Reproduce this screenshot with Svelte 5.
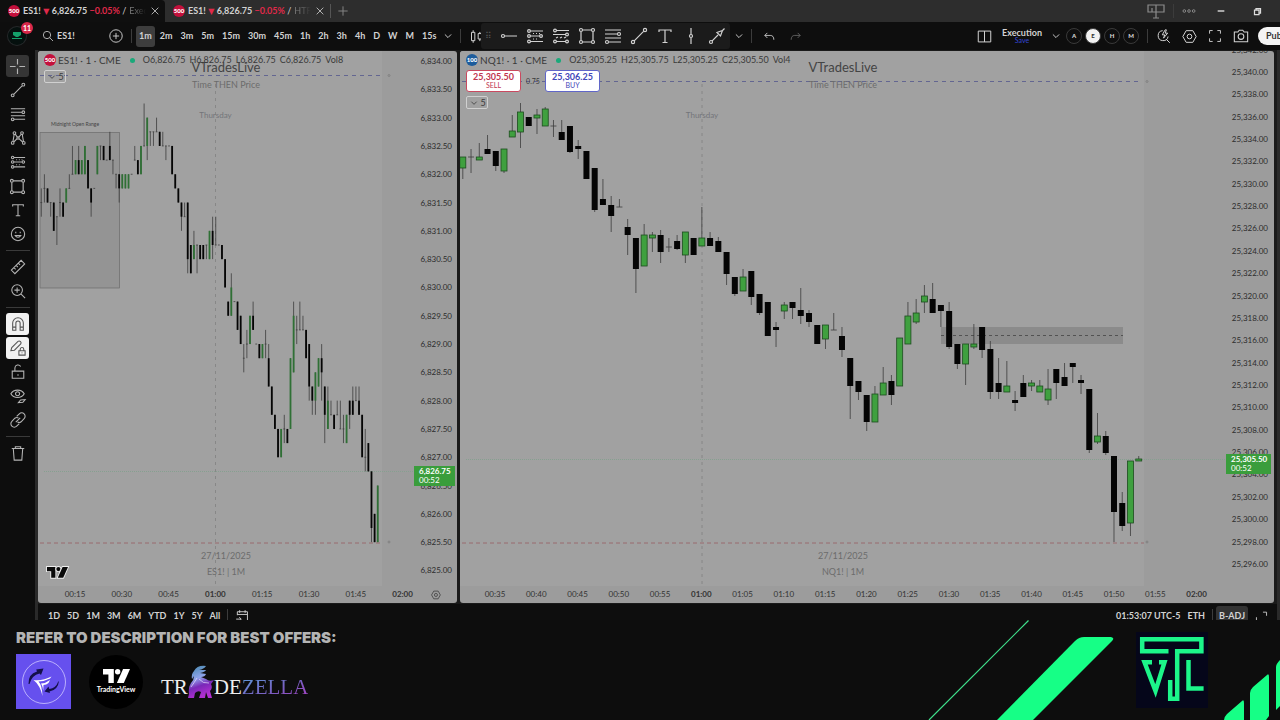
<script>
  const ring = (x, y, r) =>
    `M${x - r} ${y}a${r} ${r} 0 1 0 ${r * 2} 0a${r} ${r} 0 1 0 ${-r * 2} 0`;

  // all icons live on an 18 x 18 grid
  const icons = {
    cross: "M9 1v6M9 11v6M1 9h6M11 9h6",
    trend: `${ring(3, 15, 1.6)}${ring(15, 3, 1.6)}M4.2 13.8L13.8 4.2`,
    levels: `M1 3h16M1 7h12.5M1 11h16M4.5 15H17${ring(15, 7, 1.5)}${ring(3, 15, 1.5)}`,
    pattern: `${ring(3, 14.5, 1.5)}${ring(5, 3.5, 1.5)}${ring(9, 9, 1.3)}${ring(13.5, 3.5, 1.5)}${ring(15.5, 14.5, 1.5)}M3.3 13L4.7 5M6 4.6L8.2 8M10 8l2.6-3.2M13.8 5l1.4 8M4.3 13.5L8 9.8M10 9.8l4.2 3.7`,
    position: `${ring(3, 4, 1.4)}${ring(3, 9, 1.4)}${ring(3, 14.5, 1.4)}${ring(15, 9, 1.4)}M4.5 4H17M4.5 9h9M4.5 14.5H17M7 6.5h1M10 6.5h1M13 6.5h1M7 12h1M10 12h1`,
    channel: `${ring(3, 3.5, 1.4)}${ring(15, 7.5, 1.4)}${ring(3, 14.5, 1.4)}${ring(15, 14.5, 1.4)}M4.5 3.5H17M1 7.5h12.5M4.5 14.5h9M4 11l2-1M8 11l2-1M12 11l2-1`,
    rect: `${ring(3, 3, 1.5)}${ring(15, 3, 1.5)}${ring(3, 15, 1.5)}${ring(15, 15, 1.5)}M4.5 3h9M4.5 15h9M3 4.5v9M15 4.5v9`,
    text: "M3 5V3h12v2M9 3v12.5M6.5 15.5h5",
    smile: `${ring(9, 9, 7.5)}M6.5 6.5v1.6M11.5 6.5v1.6M5.8 10.7c1.5 2.6 4.9 2.6 6.4 0z`,
    ruler: "M1.5 12.5L12.5 1.5l4 4-11 11zM4.5 9.8l1.8 1.8M7 7.3l1.8 1.8M9.5 4.8l1.8 1.8",
    zoom: `${ring(8, 8, 6)}M12.5 12.5L17 17M5 8h6M8 5v6`,
    magnet: "M3 16V8a6 6 0 0 1 12 0v8h-3.6V8a2.4 2.4 0 0 0-4.8 0v8zM3 12.5h3.6M11.4 12.5H15",
    pencilLock: "M1 12l1-3.5L9 1.5q1.5-1 2.8.4t.3 2.6L5 11.5zM10 12h7v5h-7zM11.5 12v-1.5a2 2 0 0 1 4 0V12M13.5 14v1",
    lock: "M2.5 8h13v8h-13zM5.5 8V4.5a3.5 3.5 0 0 1 6.5-1.7M9 11.5v1.6",
    eye: `M1 6.5C4 1 13 1 16 6.5C13 12 4 12 1 6.5z${ring(8.5, 6.5, 2.3)}M9.5 16.5l2.5-3 5-.5-2.5 3z`,
    link: "M7.5 5L10.5 2a3.7 3.7 0 0 1 5.4 5.4L12.5 11q-2 1.6-4 .2M10.5 13l-3 3A3.7 3.7 0 0 1 2.1 10.6L5.5 7q2-1.6 4-.2M6.5 11.5l5-5",
    trash: "M2 4h14M6 4V2h6v2M3.7 4l1 13h8.6l1-13",
    search: `${ring(7.5, 7.5, 5.5)}M11.5 11.5L16.5 16.5`,
    plus: `${ring(9, 9, 8)}M9 5v8M5 9h8`,
    candles: "M5 1.5v2.5M5 14v2.5M3 4h4v10H3zM13 3.5v2M13 12v2.5M11 5.5h4V12h-4z",
    ray: `${ring(3, 9, 1.5)}M4.5 9H17`,
    vertical: `${ring(9, 9, 1.5)}M9 1v6.5M9 10.5V17`,
    arrow: `${ring(3, 15, 1.5)}M4.2 13.8L10 8M9 5.5l3.5 3.5 2-5.5zM14.5 3.5l2-2`,
    chevron: "M5 7l4 4 4-4",
    undo: "M6 4L2.5 7.5 6 11M2.5 7.5H10q5 0 5 6",
    redo: "M12 4l3.5 3.5L12 11M15.5 7.5H8q-5 0-5 6",
    layout: "M1.5 2.5h15v13h-15zM9 2.5v13",
    flash: "M8 2a6 6 0 1 0 6.5 7M12 12l4.5 4.5M11 1L7.5 7h3L9 11l5-6h-3l1.5-4z",
    hex: `M5 2h8l4 7-4 7H5L1 9z${ring(9, 9, 2.8)}`,
    full: "M2 6V2h4M12 2h4v4M16 12v4h-4M6 16H2v-4",
    camera: `M1.5 4.5h4l1.5-2h4l1.5 2h4v11h-15z${ring(9, 9.6, 3.2)}`,
    close: "M4 4l10 10M14 4L4 14",
    add: "M9 3v12M3 9h12",
    calendar: "M3 8V3.5h13V15.5h-5M3 7h13M6 1.5v3.5M13 1.5v3.5M1.5 13h6M5.5 10.5l2.5 2.5-2.5 2.5",
    expand: "M11 3h5v5M2 10v6h5",
    monitor: "M1 3h16v7H1zM9 3v13M6 16h6M5 10V6",
    dots: `${ring(3, 9, 1.7)}${ring(9, 9, 1.7)}${ring(15, 9, 1.7)}`,
    minimize: "M3 9h12",
    restore: "M3 6h9v9H3zM6 6V3h9v9h-3",
  };

  const sideTools = [
    ["cross", "Crosshair"], ["trend", "Trend line"], ["levels", "Fib retracement"],
    ["pattern", "Patterns"], ["position", "Position"], ["rect", "Rectangle"],
    ["text", "Text"], ["smile", "Icons"], null,
    ["ruler", "Measure"], ["zoom", "Zoom in"], null,
    ["magnet", "Magnet"], ["pencilLock", "Stay in drawing mode"], ["lock", "Lock drawings"],
    ["eye", "Hide drawings"], ["link", "Sync drawings"], null,
    ["trash", "Remove"],
  ];
  const timeframes = ["1m", "2m", "3m", "5m", "15m", "30m", "45m", "1h", "2h", "3h", "4h", "D", "W", "M", "15s"];
  const favorites = ["ray", "position", "channel", "rect", "levels", "trend", "text", "vertical", "arrow"];
  const ranges = ["1D", "5D", "1M", "3M", "6M", "YTD", "1Y", "5Y", "All"];
  const tabs = [
    { name: "Exec", active: true },
    { name: "HTF", active: false },
  ];

  // [high, body top, body bottom, low, colour], counted in ticks below 6,833.25
  const esTicks = [
    [6,7,7,8],[5,6,6,7],[6,6,7,7],[7,7,7,8],[7,7,9,9],[8,8,8,10],[6,7,7,8],[7,7,8,8],[6,6,7,7,1],[5,6,6,6],
    [3,5,5,5],[4,4,5,5,1],[3,4,5,5],[4,4,5,5,1],[3,3,5,5,1],[4,4,6,6],[6,6,7,8],[6,6,6,6],[3,3,5,5,1],[3,3,3,4],
    [3,3,4,4],[4,4,4,4],[2,3,4,4],[4,4,4,5],[5,5,5,6],[5,5,6,7],[5,5,6,6,1],[5,5,6,6,1],[5,5,6,6,1],[5,5,5,5],
    [3,4,4,4],[4,4,5,5],[3,3,5,5,1],[0,3,3,3],[1,1,3,4,1],[2,2,2,3],[2,2,2,3],[1,2,2,2],[2,2,3,3],[2,3,3,3],
    [3,3,3,4],[3,3,3,3],[3,3,5,5],[5,5,6,6],[6,6,7,7],[7,7,8,9],[7,8,8,8],[7,7,11,12],[10,10,12,12],[9,10,11,11,1],
    [10,10,10,12],[10,10,11,11],[10,10,11,11],[10,10,10,11],[9,9,11,11,1],[8,9,10,11],[8,10,10,10],[10,10,10,10],[10,10,11,11],[11,11,13,13],
    [14,14,15,15],[12,13,15,15,1],[14,14,14,14],[14,14,16,16],[15,15,17,17],[17,18,18,19],[16,17,17,18],[15,15,17,17,1],[14,15,16,16],[17,17,17,17],
    [17,17,18,18],[17,17,18,18,1],[16,17,17,18],[17,18,20,20],[20,20,22,22],[22,22,23,23],[23,23,25,25],[23,23,25,25,1],[22,23,23,24],[23,23,24,24],
    [18,18,23,23,1],[14,15,19,19,1],[15,16,16,17],[14,16,16,16],[15,16,16,16],[16,16,18,18],[17,17,20,21],[20,20,21,22],[19,19,21,22,1],[18,18,20,20,1],
    [17,18,19,21],[20,20,22,24],[20,21,23,23,1],[21,22,22,22],[22,22,23,23],[21,22,22,22],[21,23,23,23],[22,23,23,24],[22,22,24,24,1],[21,21,22,23],
    [20,21,22,22],[20,21,21,21],[20,21,22,22],[22,22,25,25],[23,25,25,26],[24,24,26,26],[26,26,30,31],[29,29,31,31],[27,27,31,31,1],
  ];
  const esCandles = esTicks.map(([h, t, b, l, up]) => [
    ...[h, t, b, l].map((k) => 103.5 + k * 14.15),
    up,
  ]);

  // same order, in chart units
  const nqCandles = [
    [157,157,168,179,1],[149,157,157,173],[143,157,160,160,1],[135,149,154,154],[151,151,166,171],[149,149,171,173,1],[115,131,137,137,1],[103,112,132,148,1],
    [117,117,126,126],[109,115,118,134,1],[107,109,126,126,1],[120,126,126,137],[120,132,140,140],[126,126,152,153],[140,146,149,159],[151,151,179,179],
    [168,168,210,212],[179,199,205,205],[196,205,216,232],[199,207,207,207],[219,227,235,255],[238,238,269,293],[224,235,266,266,1],[232,235,238,252,1],
    [230,235,252,263],[238,247,247,252],[235,241,249,250],[232,232,255,263,1],[238,238,255,255],[207,238,246,246,1],[232,238,246,246],[237,241,252,252],
    [252,252,274,285],[277,277,294,296],[269,277,291,291,1],[271,271,297,305],[294,294,313,315],[302,302,336,336],[322,327,330,347],[302,305,311,319,1],
    [302,302,308,319],[288,310,316,324],[310,313,322,327],[325,325,344,344],[325,325,339,349,1],[313,330,330,330],[327,336,350,357],[358,358,386,419],
    [381,381,392,400],[395,395,422,431],[386,394,422,422,1],[367,383,395,395,1],[375,381,395,405],[338,338,386,386,1],[302,316,344,344,1],[299,313,322,324,1],
    [285,296,302,313,1],[283,299,313,313],[305,305,311,327],[302,311,347,349],[344,344,364,369],[344,344,364,385,1],[324,344,347,349,1],[327,327,350,358],
    [341,349,392,399],[358,383,392,399],[361,386,392,392,1],[391,400,403,411],[375,383,397,397],[380,383,386,391,1],[380,386,392,392,1],[369,389,400,405,1],
    [369,369,383,399],[363,377,386,386],[363,363,367,383],[375,380,383,394],[389,389,450,453],[413,436,442,444,1],[431,436,453,455],[456,456,512,542],
    [492,503,526,531],[461,461,523,536,1],[456,459,461,461,1],
  ];

  const fmt = (n) => n.toLocaleString("en-US", { minimumFractionDigits: 2 });
  const clock = (m) =>
    `${String(Math.floor(m / 60)).padStart(2, "0")}:${String(m % 60).padStart(2, "0")}`;

  const axis = (from, step, count, y, dy) =>
    Array.from({ length: count }, (_, i) => ({ label: fmt(from - i * step), y: y + i * dy }));
  const times = (from, step, count, x, dx) =>
    Array.from({ length: count }, (_, i) => ({ label: clock(from + i * step), x: x + i * dx }));

  const charts = [
    {
      id: "es", symbol: "ES1!", logo: "500", box: [38, 51, 419, 552], plotEnd: 382,
      quote: ["O6,826.75", "H6,826.75", "L6,826.75", "C6,826.75", "Vol8"],
      candles: esCandles, x0: 41.3, dx: 3.115, body: 1.8,
      prices: axis(6834, 0.5, 19, 61, 28.3), priceX: 452,
      times: times(15, 15, 8, 75, 46.8),
      center: 226, midnight: 215.5, high: 75.5, highX: 389, low: 543, last: 471.5,
      lastText: "6,826.75", tagX: 414, tagY: 466, tagW: 41,
    },
    {
      id: "nq", symbol: "NQ1!", logo: "100", box: [460, 51, 814, 552], plotEnd: 1144,
      quote: ["O25,305.25", "H25,305.75", "L25,305.25", "C25,305.50", "Vol4"],
      candles: nqCandles, x0: 462.8, dx: 8.243, body: 6,
      prices: axis(25342, 2, 24, 49.6, 22.36), priceX: 1268,
      times: times(35, 5, 18, 495, 41.27),
      center: 843, midnight: 702, high: 81.5, highX: 1147, low: 543, last: 459.5,
      lastText: "25,305.50", tagX: 1226, tagY: 454, tagW: 45,
    },
  ];
</script>

{#snippet icon(name, size = 14)}
  <svg class="icon" width={size} height={size} viewBox="0 0 18 18" aria-hidden="true">
    <path d={icons[name]} />
  </svg>
{/snippet}

{#snippet tvMark()}
  <path d="M0 0H14V18H7V7H0z" />
  <circle cx="19" cy="3.5" r="3.5" />
  <path d="M26 0H35L27 18H18z" />
{/snippet}

{#snippet plot(c)}
  <svg class="plot" viewBox={c.box.join(" ")} role="img" aria-label="{c.symbol} chart">
    <rect x={c.box[0]} y="51" width={c.plotEnd - c.box[0]} height="535" class="area" />

    {#if c.id === "es"}
      <rect x="40" y="132.5" width="79.5" height="155.5" class="range" />
      <text x="75" y="126" class="tiny">Midnight Open Range</text>
    {:else}
      <rect x="941" y="327" width="182" height="17" class="gap" />
      <path d="M941 335.5H1123" class="gap-mid" />
    {/if}

    <path d="M{c.midnight} 84V586" class="midnight" />
    <path d="M{c.box[0] + 2} {c.high}H{c.highX - 8}" class="high" />
    <path d="M{c.box[0] + 2} {c.low}H{c.plotEnd}" class="low" />
    <path d="M{c.box[0] + 6} {c.last}H{c.tagX}" class="last" />
    <circle cx={c.highX} cy={c.high} r="1" class="handle" />
    <circle cx={c.highX} cy={c.low - 1} r="1" class="handle" />

    <text x={c.center} y="72" class="title">VTradesLive</text>
    <text x={c.center} y="88" class="sub">Time THEN Price</text>
    <text x={c.midnight} y="118" class="day">Thursday</text>
    <text x={c.center} y="559" class="sub">27/11/2025</text>
    <text x={c.center} y="575" class="sub">{c.symbol} | 1M</text>

    {#each c.candles as [high, top, bottom, low, up], i}
      {@const x = c.x0 + i * c.dx}
      <g class:up>
        <path d="M{x} {high}V{low}" class="wick" />
        {#if top === bottom}
          <path d="M{x - c.body / 2} {top}h{c.body}" class="wick" />
        {:else}
          <rect x={x - c.body / 2} y={top} width={c.body} height={bottom - top} class="body {c.id}" />
        {/if}
      </g>
    {/each}

    {#each c.prices as p}
      <text x={c.priceX} y={p.y + 3} class="price">{p.label}</text>
    {/each}
    {#each c.times as t}
      <text x={t.x} y="597" class="time" class:hour={t.label === "01:00" || t.label === "02:00"}>{t.label}</text>
    {/each}

    <rect x={c.tagX} y={c.tagY} width={c.tagW} height="20" class="tag" />
    <text x={c.tagX + 5} y={c.tagY + 8} class="tag-text strong">{c.lastText}</text>
    <text x={c.tagX + 5} y={c.tagY + 17} class="tag-text">00:52</text>

    {#if c.id === "es"}
      <g class="watermark" transform="translate(47 567) scale(.6)">{@render tvMark()}</g>
      <g class="axis-gear" transform="translate(431 590) scale(.55)"><path d={icons.hex} /></g>
    {/if}
  </svg>
{/snippet}

<div class="app">
  <header class="tabs">
    {#each tabs as tab}
      <div class="tab" class:active={tab.active}>
        <span class="coin red">500</span>
        <a href="#{tab.name}"><b>ES1!</b> <i class="down">▼</i> <b>6,826.75</b> <b class="down">−0.05%</b> /</a>
        <span class="tab-name">{tab.name}</span>
        <button aria-label="Close tab">{@render icon("close", 12)}</button>
      </div>
    {/each}
    <button class="new-tab" aria-label="New tab">{@render icon("add", 14)}</button>
    <div class="window">
      <button aria-label="Displays">{@render icon("monitor", 18)}</button>
      <span class="sep"></span>
      <button aria-label="More">{@render icon("dots", 14)}</button>
      <button class="bright" aria-label="Minimize">{@render icon("minimize", 10)}</button>
      <button class="bright" aria-label="Restore">{@render icon("restore", 9)}</button>
    </div>
  </header>

  <nav class="toolbar">
    <button class="avatar" aria-label="Profile">
      <svg width="10" height="8" viewBox="0 0 10 8" aria-hidden="true"><path d="M1 0h8v3L6 5H4L1 3zM0 6h10v1H0z" /></svg>
      <span class="badge">11</span>
    </button>
    <button class="symbol">{@render icon("search", 12)}<b>ES1!</b></button>
    <button aria-label="Compare">{@render icon("plus", 14)}</button>
    <span class="sep"></span>
    <div class="frames">
      {#each timeframes as tf, i}
        <button class="frame" class:active={i === 0}>{tf}</button>
      {/each}
    </div>
    <button class="narrow" aria-label="More intervals">{@render icon("chevron", 14)}</button>
    <span class="sep"></span>
    <button class="candle-btn" aria-label="Bar style">{@render icon("candles", 15)}</button>
    <div class="favorites">
      <span class="grip" aria-hidden="true">⠿</span>
      {#each favorites as f}
        <button class="tool" aria-label={f}>{@render icon(f, 18)}</button>
      {/each}
    </div>
    <button class="narrow" aria-label="More tools">{@render icon("chevron", 14)}</button>
    <span class="sep"></span>
    <button class="tool" aria-label="Undo">{@render icon("undo", 13)}</button>
    <button class="tool dim" aria-label="Redo">{@render icon("redo", 13)}</button>

    <div class="right">
      <button class="tool" aria-label="Layout">{@render icon("layout", 15)}</button>
      <button class="save"><b>Execution</b><span>Save</span></button>
      <button class="narrow" aria-label="Manage layouts">{@render icon("chevron", 14)}</button>
      <div class="letters">
        {#each ["A", "E", "H", "M"] as l}
          <button class="letter" class:active={l === "E"}>{l}</button>
        {/each}
      </div>
      <span class="sep"></span>
      <button class="tool" aria-label="Quick search">{@render icon("flash", 15)}</button>
      <button class="tool" aria-label="Settings">{@render icon("hex", 15)}</button>
      <button class="tool" aria-label="Fullscreen">{@render icon("full", 14)}</button>
      <button class="tool" aria-label="Snapshot">{@render icon("camera", 16)}</button>
      <button class="publish">Publish</button>
    </div>
  </nav>

  <main>
    <aside>
      {#each sideTools as tool}
        {#if tool}
          <button
            class:current={tool[0] === "cross"}
            class:on={tool[0] === "magnet" || tool[0] === "pencilLock"}
            aria-label={tool[1]}>{@render icon(tool[0], tool[0] === "cross" || tool[0] === "rect" ? 17 : 16)}</button>
        {:else}
          <hr />
        {/if}
      {/each}
    </aside>

    <section class="workspace">
      <div class="panes">
        {#each charts as c}
          <article>
            {@render plot(c)}
            <div class="legend">
              <div class="quote">
                <span class="coin" class:red={c.id === "es"}>{c.logo}</span>
                <span class="name">{c.symbol} · 1 · CME</span>
                <span class="live"></span>
                {#each c.quote as q}<span>{q}</span>{/each}
              </div>
              {#if c.id === "nq"}
                <div class="orders">
                  <button class="sell"><b>25,305.50</b>SELL</button>
                  <span>0.75</span>
                  <button class="buy"><b>25,306.25</b>BUY</button>
                </div>
              {/if}
              <button class="fold">{@render icon("chevron", 12)}5</button>
            </div>
          </article>
        {/each}
      </div>
      <div class="bottom">
        {#each ranges as r}<button>{r}</button>{/each}
        <span class="sep"></span>
        <button aria-label="Go to date">{@render icon("calendar", 14)}</button>
        <div class="session">
          <button>01:53:07 UTC-5</button>
          <button>ETH</button>
          <span class="sep"></span>
          <button class="adj">B-ADJ</button>
          <button aria-label="Maximize">{@render icon("expand", 13)}</button>
        </div>
      </div>
    </section>
  </main>

  <footer>
    <div class="promo">
      <h2>REFER TO DESCRIPTION FOR BEST OFFERS:</h2>
      <div class="brands">
        <svg width="55" height="55" viewBox="0 0 55 55" role="img" aria-label="Sponsor">
          <rect width="55" height="55" fill="#6650ee" />
          <circle cx="28" cy="28" r="21.5" fill="none" stroke="#cfc8ff" stroke-width=".8" />
          <path d="M12.500 30Q12 20 21 17.500l-.8-2L27.500 14.500l-2.500 6.500-1.500-1.500Q16 21 13.500 30z" fill="#14104a" />
          <path d="M43 27Q42 36 33.500 37.500l.5 1.500-5.500-1.500 4-5 .8 2.500Q40 34 42 28z" fill="#14104a" />
          <path d="M17.500 26Q27 27 35.500 22.500L34 24.500Q28 27.500 22.500 27.500 26 31 26.500 42 24 31 17.500 26zM25 29.500q4.500 0 9-3.500l-1.500 3q-2 1.800-5 2l-.3 6q-.5-5-2.200-7.500z" fill="#fff" />
        </svg>
        <div class="tv">
          <svg width="27" height="14" viewBox="0 0 35 18" aria-hidden="true">{@render tvMark()}</svg>
          <span>TradingView</span>
        </div>
        <div class="zella">
          <span>TR</span>
          <svg width="26" height="34" viewBox="0 0 26 34" aria-hidden="true">
            <defs>
              <linearGradient id="horse" x1="0" y1="0" x2=".3" y2="1">
                <stop offset="0" stop-color="#3f86a8" />
                <stop offset=".45" stop-color="#8fa4ea" />
                <stop offset=".7" stop-color="#7a28b8" />
                <stop offset="1" stop-color="#b02fd0" />
              </linearGradient>
            </defs>
            <path fill="url(#horse)" d="M18 1Q9 0 6 6Q3 9 4 14L6 11Q6 15 3 18Q0 23 1 29L0 33H6L7 28Q10 25 13 27L11 33H17L18 27L20 33H24L22 26Q25 23 23 19L26 15Q21 17 18 14L13 12Q17 12 18 9L12 8Q17 7 18 5L11 5Q16 4 18 1z" />
            <path fill="none" stroke="#e6ddff" stroke-width="1" opacity=".7" d="M9 13Q6 18 3 22M11 14Q15 19 21 18" />
          </svg>
          <span>DE</span><span class="tint">ZELLA</span>
        </div>
      </div>
    </div>
    <svg class="stripes" width="360" height="100" viewBox="920 620 360 100" role="img" aria-label="VTL">
      <path d="M1028.5 620.5L929 720" fill="none" stroke="#3fe08c" stroke-width="1.2" />
      <g fill="#16ff86">
        <path d="M997 720L1075 641Q1079 637 1084 637H1111Q1115 638 1112 641L1033 720z" />
        <path d="M1224 720Q1224 717 1227 714L1242 701Q1244 699 1244 703V720z" />
        <path d="M1250 720V693Q1250 690 1253 687L1267 675Q1269 673 1269 677V716L1266 720z" />
        <path d="M1276 710V667Q1276 664 1280 660V706z" />
      </g>
      <rect x="1136" y="632" width="72" height="76" fill="#05061a" />
      <g fill="none" stroke="#1cf58a" stroke-width="4.5">
        <path d="M1168.5 651.2H1142.2V639.2H1201.400V651.200H1177.200V698.700H1170.200V680" />
        <path d="M1152 662.200H1144.500L1155.500 691L1164.500 662.200H1159" />
        <path d="M1188.500 660V688.500H1203.600" />
      </g>
    </svg>
  </footer>
</div>

<style>
  :global(body) {
    margin: 0;
    background: #0d0d0d;
  }

  .app {
    overflow: hidden;
    font-family: Lato, "Open Sans", sans-serif;
    font-size: 9px;
    line-height: 12px;
    color: #d2d2d2;
    background: #0e0e0e;
  }

  button {
    display: flex;
    align-items: center;
    justify-content: center;
    flex: none;
    margin: 0;
    padding: 0;
    border: 0;
    background: none;
    color: inherit;
    font: inherit;
  }

  a {
    color: inherit;
    text-decoration: none;
  }

  .icon {
    display: block;
    flex: none;
    overflow: visible;
  }

  .icon path {
    fill: none;
    stroke: currentColor;
    stroke-width: 1.2;
  }

  .sep {
    flex: none;
    width: 1px;
    height: 14px;
    background: #3c3c3c;
  }

  /* tabs */
  .tabs {
    display: flex;
    align-items: center;
    height: 22px;
    background: #2d2d2d;
  }

  .tab {
    display: flex;
    align-items: center;
    gap: 3px;
    box-sizing: border-box;
    width: 165px;
    height: 22px;
    padding: 0 4px 0 8px;
    white-space: nowrap;
  }

  .tab.active {
    background: #0f0f0f;
    border-radius: 0 4px 0 0;
  }

  .tab i {
    font-family: "DejaVu Sans", sans-serif;
    font-size: 8px;
    font-style: normal;
  }

  .tab-name {
    flex: 1;
    overflow: hidden;
    color: #777;
    mask-image: linear-gradient(90deg, #000 30%, transparent);
  }

  .down {
    color: #e0294a;
  }

  .coin {
    display: inline-flex;
    align-items: center;
    justify-content: center;
    flex: none;
    width: 12px;
    height: 12px;
    border-radius: 50%;
    background: #1c5c9c;
    color: #fff;
    font-size: 6px;
    font-weight: 900;
  }

  .coin.red {
    background: #c4103c;
  }

  .new-tab {
    width: 24px;
    border-left: 1px solid #555;
    color: #888;
  }

  .window {
    display: flex;
    align-items: center;
    gap: 14px;
    margin-left: auto;
    padding-right: 12px;
    color: #8c8c8c;
  }

  .window .sep {
    margin: 0 -6px;
  }

  .window .bright {
    width: 22px;
    color: #ddd;
  }

  .window .bright :global(path) {
    stroke-width: 2.5;
  }

  /* toolbar */
  .toolbar {
    display: flex;
    align-items: center;
    height: 28px;
    overflow: hidden;
  }

  .avatar {
    position: relative;
    width: 18px;
    height: 18px;
    margin: 0 16px 0 8px;
    border-radius: 50%;
    background: #05100e;
    box-shadow: 0 0 0 1px #25282a;
  }

  .avatar path {
    fill: #14a06a;
  }

  .badge {
    position: absolute;
    top: -5px;
    right: -7px;
    width: 12px;
    border-radius: 6px;
    background: #d8284a;
    color: #fff;
    font-size: 7px;
    font-weight: 700;
  }

  .symbol {
    justify-content: flex-start;
    gap: 3px;
    width: 67px;
  }

  .toolbar > .sep {
    margin: 0 4px 0 8px;
  }

  .toolbar > .narrow + .sep {
    margin-left: 3px;
  }

  .frames {
    display: flex;
    gap: 2px;
  }

  .frame {
    height: 21px;
    padding: 0 3px;
    border-radius: 3px;
    font-weight: 700;
  }

  .frame.active {
    background: #3d3d3d;
  }

  .narrow {
    width: 18px;
  }

  .candle-btn {
    width: 16px;
    margin: 0 -3px 0 3px;
  }

  .favorites {
    display: flex;
    align-items: center;
    height: 26px;
    background: #1b1b1b;
    border-radius: 3px;
  }

  .grip {
    width: 15px;
    text-align: center;
    color: #555;
  }

  .tool {
    width: 26px;
    height: 24px;
  }

  .dim {
    color: #666;
  }

  .right {
    display: flex;
    align-items: center;
    margin-left: auto;
  }

  .save {
    flex-direction: column;
    width: 50px;
    line-height: 9px;
  }

  .save span {
    color: #3346d6;
    font-size: 7px;
    line-height: 7px;
  }

  .letters {
    display: flex;
    gap: 3px;
    margin: 0 8px 0 1px;
  }

  .letter {
    box-sizing: border-box;
    width: 16px;
    height: 16px;
    border: 1px solid #3a3a3a;
    border-radius: 50%;
    font-size: 6px;
    font-weight: 900;
  }

  .letter.active {
    background: #f2f2f2;
    color: #333;
  }

  .right > .sep {
    margin-right: 2px;
  }

  .publish {
    justify-content: flex-start;
    width: 48px;
    height: 18px;
    margin: 0 -26px 0 4px;
    padding-left: 8px;
    border-radius: 9px;
    background: #f4f4f4;
    color: #333;
    font-weight: 700;
  }

  /* body */
  main {
    display: flex;
    padding-right: 3px;
    background: #2a2a2a;
  }

  aside {
    display: flex;
    flex-direction: column;
    align-items: center;
    gap: 2px;
    flex: none;
    box-sizing: border-box;
    width: 35px;
    margin-right: 3px;
    padding-top: 5px;
    background: #0d0d0d;
    color: #b4b4b4;
  }

  aside button {
    width: 23px;
    height: 22px;
    border-radius: 3px;
  }

  aside .current {
    background: #353535;
  }

  aside .on {
    background: #f1f1f1;
    color: #555;
  }

  aside hr {
    width: 24px;
    height: 1px;
    margin: 3px 0;
    border: 0;
    background: #3a3a3a;
  }

  .workspace {
    flex: 1;
    min-width: 0;
    background: #0e0e0e;
  }

  .panes {
    display: grid;
    grid-template-columns: 419fr 814fr;
    gap: 3px;
    padding: 1px 3px 1px 0;
    background: #1a1a1a;
  }

  article {
    position: relative;
    min-width: 0;
    overflow: hidden;
    border-radius: 3px;
    background: #9c9c9c;
    color: #3a3a3a;
  }

  .plot {
    display: block;
    width: 100%;
    height: auto;
    font-size: 8px;
    text-anchor: middle;
  }

  .plot path {
    fill: none;
  }

  .area {
    fill: #a1a1a1;
  }

  .range {
    fill: #949494;
    stroke: #6c6c6c;
    stroke-width: 0.7;
  }

  .gap {
    fill: #8b8b8b;
  }

  .gap-mid {
    stroke: #444;
    stroke-width: 0.8;
    stroke-dasharray: 3 3;
  }

  .midnight {
    stroke: #858585;
    stroke-width: 0.9;
    stroke-dasharray: 3 4;
  }

  .high {
    stroke: #5c6090;
    stroke-width: 0.9;
    stroke-dasharray: 4 4;
  }

  .low {
    stroke: #99646a;
    stroke-width: 0.9;
    stroke-dasharray: 4 3;
  }

  .last {
    stroke: #86a090;
    stroke-dasharray: 1 1;
  }

  .handle {
    fill: none;
    stroke: #777;
    stroke-width: 0.7;
  }

  .tiny {
    font-size: 5px;
    fill: #444;
  }

  .title {
    font-size: 13px;
    fill: #444;
  }

  .sub {
    font-size: 9px;
    fill: #6c6c6c;
  }

  .day {
    fill: #73757a;
  }

  .plot .wick {
    stroke: #3c3c3c;
    stroke-width: 0.8;
  }

  .body {
    fill: #050505;
  }

  .up .body {
    fill: #3fa03f;
    stroke: #1d4d1f;
    stroke-width: 0.8;
  }

  .up .body.es {
    fill: #2f7035;
    stroke: none;
  }

  .price {
    text-anchor: end;
    fill: #2c2c2c;
  }

  .time {
    fill: #333;
  }

  .hour {
    font-weight: 700;
  }

  .tag {
    fill: #3a9d3c;
  }

  .tag-text {
    text-anchor: start;
    fill: #fff;
  }

  .strong {
    font-weight: 700;
  }

  .plot .watermark :global(*) {
    fill: #0a0a0a;
    stroke: #eee;
    stroke-width: 3;
    paint-order: stroke;
  }

  .axis-gear {
    stroke: #444;
    stroke-width: 1.5;
  }

  .legend {
    position: absolute;
    top: 3px;
    left: 6px;
    display: flex;
    flex-direction: column;
    align-items: flex-start;
    gap: 4px;
  }

  .quote {
    display: flex;
    align-items: center;
    gap: 4px;
    white-space: nowrap;
  }

  .quote .name {
    margin: 0 5px 0 -2px;
    font-size: 10px;
  }

  .live {
    width: 5px;
    height: 5px;
    margin-right: 4px;
    border-radius: 50%;
    background: #1aa97a;
  }

  .orders {
    display: flex;
    align-items: center;
    gap: 4px;
    font-size: 7px;
  }

  .orders button {
    flex-direction: column;
    box-sizing: border-box;
    width: 55px;
    height: 22px;
    border: 1px solid #c94a60;
    border-radius: 3px;
    background: #fff;
    color: #c03550;
    line-height: 9px;
  }

  .orders .buy {
    border-color: #6066c8;
    color: #3f46b8;
  }

  .orders b {
    font-size: 9px;
  }

  .orders span {
    width: 16px;
    text-align: center;
  }

  .fold {
    box-sizing: border-box;
    width: 22px;
    height: 13px;
    border: 1px solid #d0d0d0;
    border-radius: 2px;
  }

  .bottom {
    display: flex;
    align-items: flex-start;
    gap: 7px;
    height: 16px;
    padding: 0 9px 0 10px;
    overflow: hidden;
    font-weight: 700;
  }

  .bottom button {
    height: 24px;
  }

  .bottom .sep {
    margin-top: 5px;
  }

  .session {
    display: flex;
    align-items: flex-start;
    gap: 7px;
    margin-left: auto;
  }

  .session .adj {
    height: 20px;
    margin: 2px 0 0 -4px;
    padding: 0 3px;
    border-radius: 3px;
    background: #333;
  }

  /* footer */
  footer {
    display: flex;
    justify-content: space-between;
    background: #0d0d0d;
  }

  .promo {
    padding: 8px 0 0 16px;
  }

  h2 {
    margin: 0 0 6px;
    color: #b4b4b4;
    font-family: Inter, sans-serif;
    font-size: 15px;
    font-weight: 900;
    line-height: 20px;
  }

  .brands {
    display: flex;
    align-items: center;
    gap: 18px;
  }

  .tv {
    display: flex;
    flex-direction: column;
    align-items: center;
    justify-content: center;
    gap: 2px;
    width: 54px;
    height: 54px;
    border-radius: 50%;
    background: #000;
    color: #fff;
    font-size: 7px;
    font-weight: 700;
    line-height: 9px;
  }

  .tv svg {
    fill: #fff;
  }

  .zella {
    display: flex;
    align-items: flex-end;
    color: #eee;
    font-family: "Liberation Serif", serif;
    font-size: 21px;
    line-height: 24px;
  }

  .tint {
    background: linear-gradient(160deg, #5aa0dc, #7a5cc0 60%, #b040c8);
    background-clip: text;
    color: transparent;
  }

  .stripes {
    display: block;
    flex: none;
  }
</style>
